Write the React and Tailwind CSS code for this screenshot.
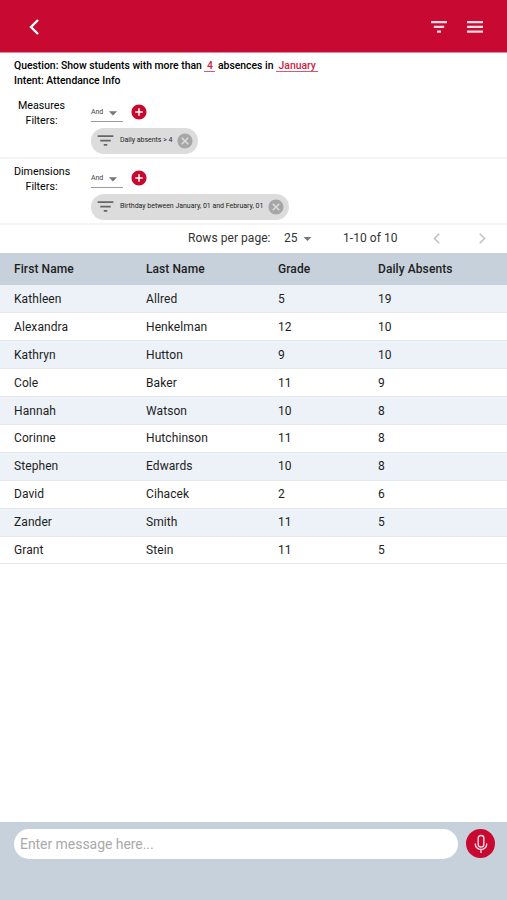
import { MdAddCircle, MdArrowDropDown, MdCancel, MdFilterList } from "react-icons/md";

const students = [
  { firstName: "Kathleen", lastName: "Allred", grade: 5, absents: 19 },
  { firstName: "Alexandra", lastName: "Henkelman", grade: 12, absents: 10 },
  { firstName: "Kathryn", lastName: "Hutton", grade: 9, absents: 10 },
  { firstName: "Cole", lastName: "Baker", grade: 11, absents: 9 },
  { firstName: "Hannah", lastName: "Watson", grade: 10, absents: 8 },
  { firstName: "Corinne", lastName: "Hutchinson", grade: 11, absents: 8 },
  { firstName: "Stephen", lastName: "Edwards", grade: 10, absents: 8 },
  { firstName: "David", lastName: "Cihacek", grade: 2, absents: 6 },
  { firstName: "Zander", lastName: "Smith", grade: 11, absents: 5 },
  { firstName: "Grant", lastName: "Stein", grade: 11, absents: 5 },
];

function Chevron({ direction, className }) {
  return (
    <svg viewBox="0 0 10 16" fill="none" stroke="currentColor" className={className}>
      <path d={direction === "left" ? "M9 1 2 8l7 7" : "M1 1l7 7-7 7"} />
    </svg>
  );
}

function FilterGroup({ name, label }) {
  return (
    <section className="flex h-[66px] shrink-0 border-b-2 border-[#f4f4f4] pl-3.5">
      <div className="w-[55px] pt-[5px] text-center text-[10.7px] leading-[15px] text-black">
        <p>{name}</p>
        <p>Filters:</p>
      </div>
      <div className="pt-[13px] pl-[22px]">
        <div className="flex h-5 items-start">
          <button type="button" className="flex h-4 w-8 justify-between border-b border-[#9a9a9a] text-[7px] leading-[13px] text-[#444]">
            <span className="tracking-[-0.1px]">And</span>
            <MdArrowDropDown className="mt-[-3px] size-5 text-[#777]" />
          </button>
          <button type="button" className="mt-[-3px] ml-[7px] text-[#c8092f]">
            <MdAddCircle className="size-[18px]" />
          </button>
        </div>
        <div className="mt-[2px] flex h-[26px] w-fit items-center rounded-full bg-[#dcdcdc] pr-1 pb-px pl-1">
          <MdFilterList className="size-[21px] text-[#666]" />
          <span className="pr-1 pl-1 text-[7px] tracking-[-0.02px] whitespace-nowrap">{label}</span>
          <MdCancel className="size-[18px] text-[#a6a6a6]" />
        </div>
      </div>
    </section>
  );
}

export default function App() {
  return (
    <div className="flex h-[900px] w-[507px] flex-col overflow-hidden bg-white font-['Roboto',sans-serif] text-[#1d1d1d]">
      <header className="flex h-[53px] shrink-0 items-center border-b border-[#e58a9e] bg-[#c80932] pt-[2px] pr-6 pl-[29px] text-white">
        <button type="button">
          <Chevron direction="left" className="h-4 w-2.5 stroke-[2.4]" />
        </button>
        <button type="button" className="ml-auto">
          <svg viewBox="0 0 16 12" className="h-3 w-4" fill="#ffdce2">
            <path d="M0 0h16v2.2H0zM2.8 4.8h10.4V7H2.8zM6 9.6h4v2.2H6z" />
          </svg>
        </button>
        <button type="button" className="ml-5">
          <svg viewBox="0 0 16 12" className="h-3 w-4" fill="#ffdce2">
            <path d="M0 0h16v2.2H0zM0 4.8h16V7H0zM0 9.6h16v2.2H0z" />
          </svg>
        </button>
      </header>

      <div className="h-10 shrink-0 pt-[5px] pl-3.5 text-[10.4px] leading-[15px] font-medium text-black">
        <p className="flex whitespace-pre">
          <span>Question: Show students with more than </span>
          <span className="h-[14px] border-b border-[#d65872] px-[2.5px] text-[#d01c40]">4</span>
          <span> absences in </span>
          <span className="h-[14px] border-b border-[#d65872] px-[2.5px] text-[#d01c40]">January</span>
        </p>
        <p>Intent: Attendance Info</p>
      </div>

      <FilterGroup name="Measures" label="Daily absents > 4" />
      <FilterGroup name="Dimensions" label="Birthday between January, 01 and February, 01" />

      <div className="flex h-7 shrink-0 items-center pb-[2px] pl-[188px] text-xs tracking-[0.05px] text-[#333]">
        <span className="w-[96px] whitespace-nowrap">Rows per page:</span>
        <button type="button" className="flex w-[59px] items-center">
          25
          <MdArrowDropDown className="size-[19px] text-[#777]" />
        </button>
        <span className="w-[90px] whitespace-nowrap">1-10 of 10</span>
        <Chevron direction="left" className="h-[11px] w-[7px] stroke-2 text-[#bdbdbd]" />
        <Chevron direction="right" className="ml-[39px] h-[11px] w-[7px] stroke-2 text-[#bdbdbd]" />
      </div>

      <table className="w-full table-fixed border-collapse text-left text-xs tracking-[0.08px]">
        <colgroup>
          <col className="w-[132px]" />
          <col className="w-[132px]" />
          <col className="w-[100px]" />
          <col />
        </colgroup>
        <thead className="bg-[#c7d1db]">
          <tr className="h-8">
            <th className="pl-3.5 font-medium">First Name</th>
            <th className="pl-3.5 font-medium">Last Name</th>
            <th className="pl-3.5 font-medium">Grade</th>
            <th className="pl-3.5 font-medium">Daily Absents</th>
          </tr>
        </thead>
        <tbody>
          {students.map((student) => (
            <tr key={student.lastName} className="h-[27.9px] border-b border-[#e6e9ec] odd:bg-[#ecf2f7]">
              <td className="pl-3.5">{student.firstName}</td>
              <td className="pl-3.5">{student.lastName}</td>
              <td className="pl-3.5">{student.grade}</td>
              <td className="pl-3.5">{student.absents}</td>
            </tr>
          ))}
        </tbody>
      </table>

      <footer className="mt-auto flex h-[78px] shrink-0 items-start bg-[#c7d1db] pt-[7px] pl-3.5">
        <input
          type="text"
          placeholder="Enter message here..."
          className="h-[30px] w-[444px] rounded-full bg-white pl-[6px] text-sm tracking-[-0.05px] placeholder:text-[#aaa]"
        />
        <button type="button" className="ml-2 flex size-[29px] items-center justify-center rounded-full bg-[#c80932]">
          <svg viewBox="0 0 14 20" fill="none" stroke="#ffdce2" strokeWidth="1.4" className="h-5 w-3.5">
            <rect x="4.2" y="1.5" width="5.6" height="11.5" rx="2.6" />
            <path d="M1.3 9.5v.8a5.7 5.2 0 0 0 11.4 0v-.8M7 15.5V19" />
          </svg>
        </button>
      </footer>
    </div>
  );
}
